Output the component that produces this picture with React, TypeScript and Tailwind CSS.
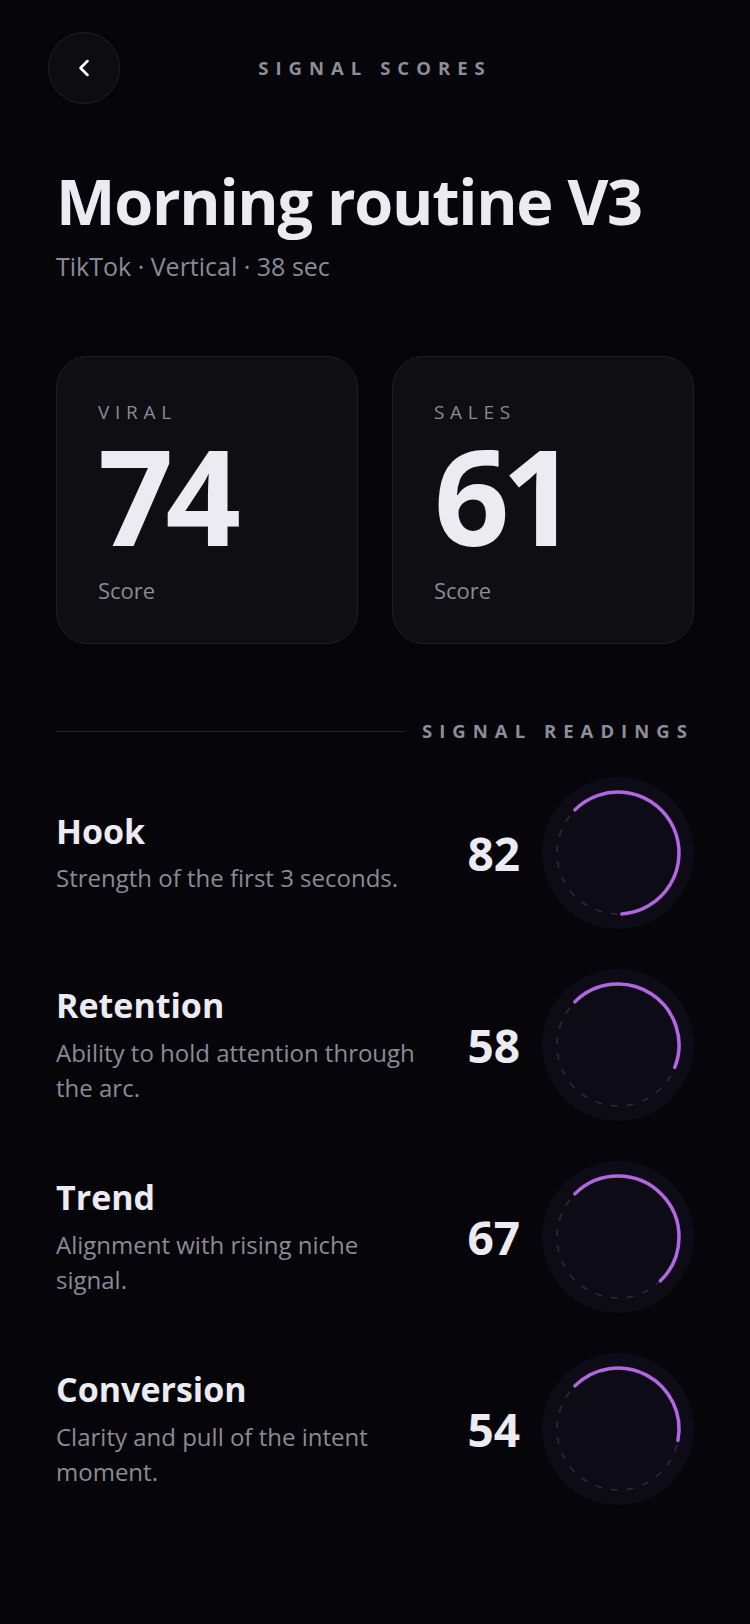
import React from 'react';
import { ChevronLeft } from 'lucide-react';

interface Signal {
  name: string;
  desc: string;
  score: number;
}

const signals: Signal[] = [
  { name: 'Hook', desc: 'Strength of the first 3 seconds.', score: 82 },
  { name: 'Retention', desc: 'Ability to hold attention through the arc.', score: 58 },
  { name: 'Trend', desc: 'Alignment with rising niche signal.', score: 67 },
  { name: 'Conversion', desc: 'Clarity and pull of the intent moment.', score: 54 },
];

const point = (deg: number, r: number) => {
  const rad = (deg * Math.PI) / 180;
  return [76 + r * Math.sin(rad), 76 - r * Math.cos(rad)];
};

const Gauge: React.FC<{ value: number }> = ({ value }) => {
  const r = 61;
  const start = -45;
  const end = start + value * 2.7;
  const [x0, y0] = point(start, r);
  const [x1, y1] = point(end, r);
  const large = end - start > 180 ? 1 : 0;
  return (
    <svg width="152" height="152" viewBox="0 0 152 152" className="shrink-0">
      <circle cx="76" cy="76" r="76" fill="#0d0b15" />
      <circle cx="76" cy="76" r={r} fill="none" stroke="#2c2938" strokeWidth="1.6" strokeDasharray="7 9" />
      <path
        d={`M ${x0} ${y0} A ${r} ${r} 0 ${large} 1 ${x1} ${y1}`}
        fill="none"
        stroke="#b366e3"
        strokeWidth="3.5"
        strokeLinecap="round"
      />
    </svg>
  );
};

const ScoreCard: React.FC<{ label: string; value: number }> = ({ label, value }) => (
  <div className="flex-1 h-[288px] rounded-[32px] bg-[#0e0e13] border border-[#1f1f27] pl-[41px] pt-[46px]">
    <div className="text-[19px] tracking-[0.3em] text-[#8b8a96] leading-none">{label}</div>
    <div className="text-[132px] font-bold leading-none tracking-[-0.06em] text-[#ecebf2] mt-[7px]">{value}</div>
    <div className="text-[22px] text-[#8b8a96] leading-none mt-[18px]">Score</div>
  </div>
);

export default function App() {
  return (
    <div className="min-h-[1624px] w-[750px] bg-[#060509] px-[56px] pt-[32px] pb-[80px]" style={{ fontFamily: '"Open Sans", sans-serif' }}>
      <div className="relative flex items-center justify-center h-[72px]">
        <button className="absolute left-[-8px] top-0 w-[72px] h-[72px] rounded-full bg-[#0c0c11] border border-[#1f1f28] flex items-center justify-center text-white">
          <ChevronLeft size={28} strokeWidth={2.2} />
        </button>
        <div className="text-[18.5px] font-bold tracking-[0.38em] text-[#8e8d99]">SIGNAL SCORES</div>
      </div>

      <h1 className="mt-[65px] text-[63px] font-bold leading-none tracking-[-0.02em] text-[#ecebf2]">Morning routine V3</h1>
      <div className="mt-[22px] text-[25px] text-[#8b8a96] leading-none">TikTok · Vertical · 38 sec</div>

      <div className="mt-[77px] flex gap-[34px]">
        <ScoreCard label="VIRAL" value={74} />
        <ScoreCard label="SALES" value={61} />
      </div>

      <div className="mt-[78px] flex items-center gap-[16px]">
        <div className="flex-1 h-px bg-[#23222b]" />
        <div className="text-[18.5px] font-bold tracking-[0.38em] text-[#8e8d99] leading-none">SIGNAL READINGS</div>
      </div>

      <div className="mt-[36px] flex flex-col gap-[40px]">
        {signals.map((s) => (
          <div key={s.name} className="flex items-center">
            <div className="w-[366px]">
              <div className="text-[34px] font-bold leading-tight text-[#ecebf2]">{s.name}</div>
              <div className="text-[24px] leading-[35px] text-[#8b8a96] mt-[8px]">{s.desc}</div>
            </div>
            <div className="flex-1 text-right pr-[22px] text-[46px] font-bold text-[#ecebf2] leading-none">{s.score}</div>
            <Gauge value={s.score} />
          </div>
        ))}
      </div>
    </div>
  );
}
